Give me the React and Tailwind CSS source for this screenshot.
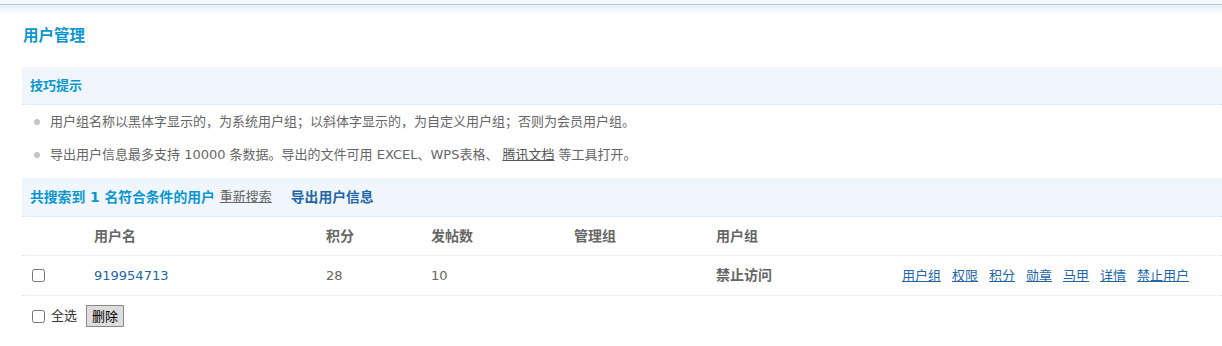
// App.jsx - 用户管理
const links = ['用户组', '权限', '积分', '勋章', '马甲', '详情', '禁止用户'];

function App() {
  return (
    <div
      className="min-h-screen bg-white text-[13px] text-[#666]"
      style={{ fontFamily: '"DejaVu Sans", "Noto Sans CJK SC", sans-serif' }}
    >
      {/* 상단 바 */}
      <div className="h-[4px] bg-[#f5f9fc]" />
      <div className="h-px bg-[#aacde3]" />
      <div className="h-[10px] bg-gradient-to-b from-[#e4f1fa] to-white" />

      <div className="pl-[22px]">
        <h1 className="h-[42px] leading-[42px] pl-px text-[15.5px] font-bold text-[#0a96cf]">用户管理</h1>

        {/* 技巧提示 */}
        <div className="mt-[10px] h-[38px] flex items-center pl-[8px] bg-[#f0f6fc] border-b border-dotted border-[#d3e5f3] text-[13px] font-bold text-[#0a96cf]">
          技巧提示
        </div>
        <ul className="pb-[7px]">
          <li className="h-[33px] flex items-center">
            <span className="ml-[12px] mr-[10px] w-[6px] h-[6px] rounded-full bg-[#c4c4c4]" />
            用户组名称以黑体字显示的，为系统用户组；以斜体字显示的，为自定义用户组；否则为会员用户组。
          </li>
          <li className="h-[33px] flex items-center">
            <span className="ml-[12px] mr-[10px] w-[6px] h-[6px] rounded-full bg-[#c4c4c4]" />
            导出用户信息最多支持 10000 条数据。导出的文件可用 EXCEL、WPS表格、
            <a className="ml-[4px] mr-[4px] underline text-[#555]">腾讯文档</a>
            等工具打开。
          </li>
        </ul>

        {/* 搜索结果 */}
        <div className="h-[39px] flex items-center pl-[8px] bg-[#f0f6fc] border-b border-dotted border-[#d3e5f3]">
          <span className="text-[13.8px] font-bold text-[#0a96cf]">共搜索到 1 名符合条件的用户</span>
          <a className="ml-[5px] underline text-[#666]">重新搜索</a>
          <a className="ml-[19px] text-[13.8px] font-bold text-[#2366a8]">导出用户信息</a>
        </div>

        {/* 表头 */}
        <div className="h-[39px] grid grid-cols-[72px_232px_105px_143px_142px_186px_1fr] items-center border-b border-dotted border-[#d3e5f3] text-[14px] font-bold">
          <div />
          <div>用户名</div>
          <div>积分</div>
          <div>发帖数</div>
          <div>管理组</div>
          <div>用户组</div>
          <div />
        </div>

        {/* 数据行 */}
        <div className="h-[40px] grid grid-cols-[72px_232px_105px_143px_142px_186px_1fr] items-center border-b border-dotted border-[#d3e5f3]">
          <div className="pl-[10px] flex items-center">
            <input type="checkbox" className="w-[13px] h-[13px] m-0" />
          </div>
          <div className="text-[#2366a8]">919954713</div>
          <div>28</div>
          <div>10</div>
          <div />
          <div className="text-[14px] font-bold">禁止访问</div>
          <div className="flex gap-[11px] text-[#2366a8]">
            {links.map((l) => (
              <a key={l} className="underline">{l}</a>
            ))}
          </div>
        </div>

        {/* 全选 / 删除 */}
        <div className="h-[40px] flex items-center pl-[10px]">
          <input type="checkbox" className="w-[13px] h-[13px] m-0" />
          <span className="ml-[6px] text-[#333]">全选</span>
          <button className="ml-[9px] h-[22px] px-[5px] bg-[#dddddd] border border-[#888] text-[13px] text-black leading-none">
            删除
          </button>
        </div>
      </div>
    </div>
  );
}

export default App;
